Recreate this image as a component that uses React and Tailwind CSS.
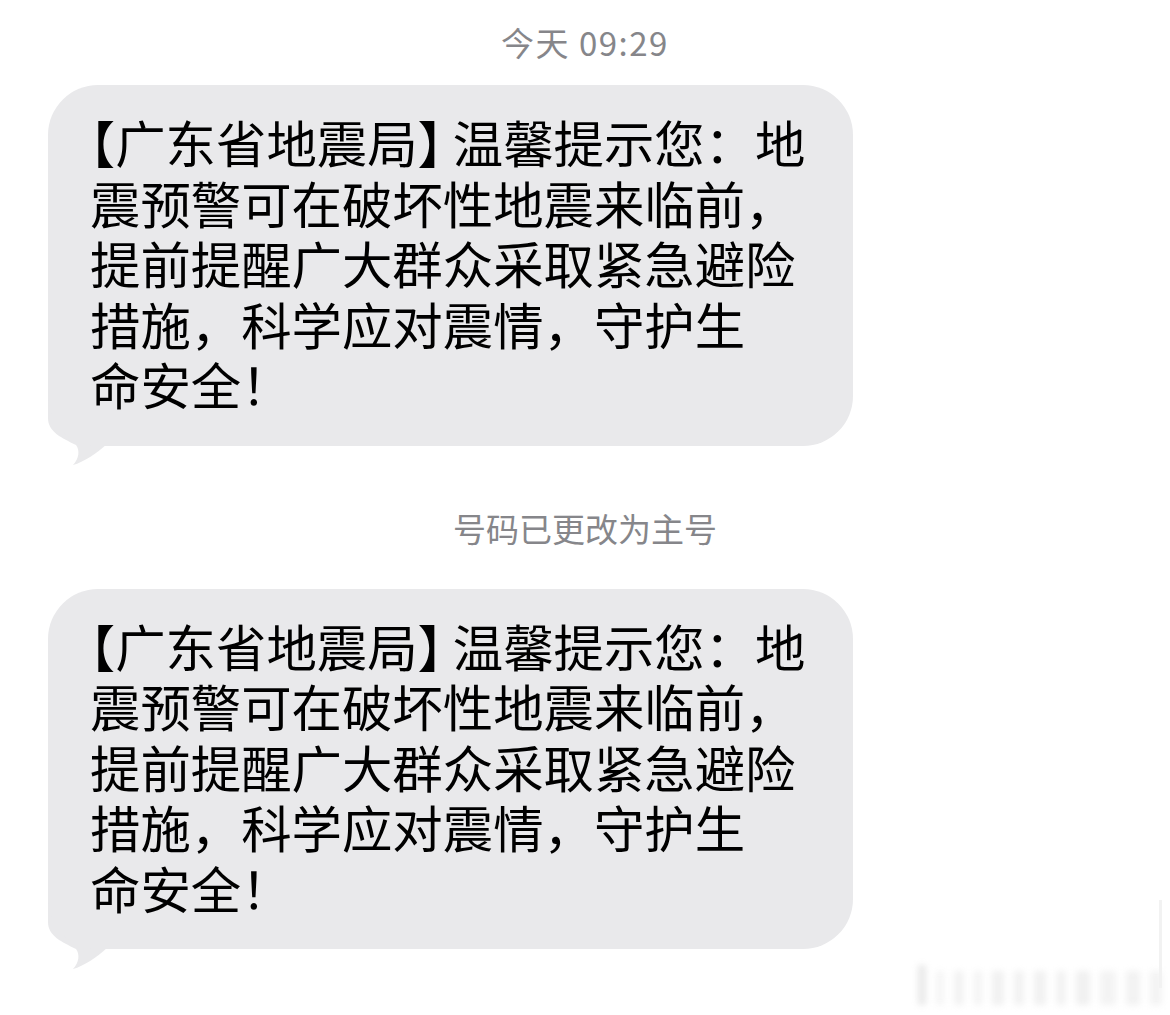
const message = [
  ["【", "广东省地震局", "】", "温馨提示您：地"],
  ["", "震预警可在破坏性地震来临前，", "", ""],
  ["", "提前提醒广大群众采取紧急避险", "", ""],
  ["", "措施，科学应对震情，守护生", "", ""],
  ["", "命安全！", "", ""],
];

function Line({ parts }) {
  const [open, body, close, rest] = parts;
  return (
    <div className="whitespace-nowrap">
      {open && <span className="[font-feature-settings:'halt']">{open}</span>}
      {body}
      {close && <span className="mr-[10px] [font-feature-settings:'halt']">{close}</span>}
      {rest}
    </div>
  );
}

function Bubble() {
  return (
    <div className="relative ml-[48px] w-[805px]">
      <div className="relative z-10 rounded-[50px] bg-[#e9e9eb] pl-[42px] pt-[27px] pb-[31px] text-[50.4px] leading-[60.5px] text-black">
        {message.map((parts, i) => (
          <Line key={i} parts={parts} />
        ))}
      </div>
      <svg
        className="absolute left-0 top-[295px] z-0"
        width="80"
        height="90"
        viewBox="0 0 80 90"
      >
        <path
          d="M0 0 L0 38 C0 52 14 58 28 65 C32 70 31 79 25 85 C36 82 48 74 60 63 L80 63 L80 0 Z"
          fill="#e9e9eb"
        />
      </svg>
    </div>
  );
}

function Note({ children, wide }) {
  return (
    <div
      className={
        wide
          ? "text-center text-[33px] leading-[40px] tracking-[1.5px] text-[#86868a]"
          : "text-center text-[33px] leading-[40px] text-[#86868a]"
      }
    >
      {children}
    </div>
  );
}

export default function App() {
  return (
    <div
      className="relative h-[1015px] w-[1170px] overflow-hidden bg-white"
      style={{ fontFamily: '"Noto Sans CJK SC", "Noto Sans", sans-serif' }}
    >
      <div className="pt-[22px]">
        <Note wide>今天 09:29</Note>
      </div>
      <div className="mt-[23px]">
        <Bubble />
      </div>
      <div className="mt-[62px]">
        <Note>号码已更改为主号</Note>
      </div>
      <div className="mt-[41px]">
        <Bubble />
      </div>

      {/* faded watermark, bottom right */}
      <div className="absolute right-[8px] top-[965px] flex h-[40px] items-end gap-[10px] opacity-40 blur-[3px]">
        <div className="h-[40px] w-[8px] bg-[#c8c8c8]" />
        <div className="h-[34px] w-[8px] bg-[#e6e6e6]" />
        <div className="h-[34px] w-[10px] bg-[#e0e0e0]" />
        <div className="h-[34px] w-[8px] bg-[#e2e2e2]" />
        <div className="h-[34px] w-[12px] bg-[#dcdcdc]" />
        <div className="h-[34px] w-[10px] bg-[#dedede]" />
        <div className="h-[34px] w-[12px] bg-[#dcdcdc]" />
        <div className="h-[34px] w-[10px] bg-[#e0e0e0]" />
        <div className="h-[34px] w-[14px] bg-[#dadada]" />
        <div className="h-[34px] w-[16px] bg-[#e2e2e2]" />
        <div className="h-[34px] w-[14px] bg-[#dedede]" />
        <div className="h-[34px] w-[12px] bg-[#e2e2e2]" />
      </div>
      <div className="absolute right-[8px] top-[900px] h-[88px] w-[3px] bg-[#f2f2f2]" />
    </div>
  );
}
